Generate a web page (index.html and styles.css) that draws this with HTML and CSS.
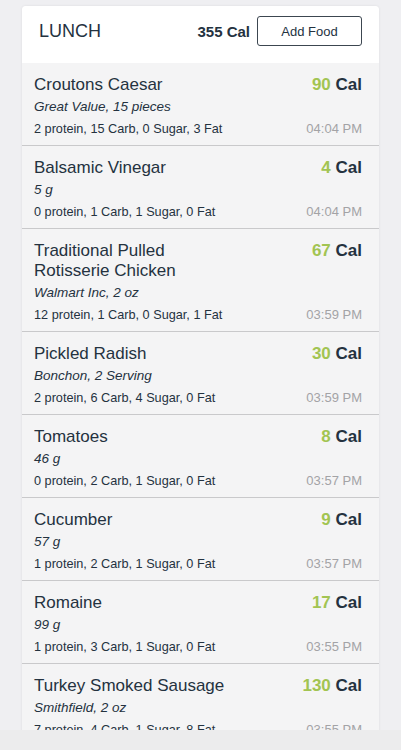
FILE: index.html
```html
<!DOCTYPE html>
<html lang="en">
<head>
    <meta charset="UTF-8">
    <meta name="viewport" content="width=device-width, initial-scale=1.0">
    <title>Lunch</title>
    <link rel="stylesheet" href="styles.css">
</head>
<body>
    <div class="screen">
        <div class="card">
            <div class="card-header">
                <h1>LUNCH</h1>
                <span class="total">355 Cal</span>
                <button class="add-btn">Add Food</button>
            </div>

            <div class="food">
                <div class="food-row">
                    <div class="food-name">Croutons Caesar</div>
                    <div class="food-cal"><span class="num">90</span> Cal</div>
                </div>
                <div class="food-serving">Great Value, 15 pieces</div>
                <div class="food-row">
                    <div class="food-macros">2 protein, 15 Carb, 0 Sugar, 3 Fat</div>
                    <div class="food-time">04:04 PM</div>
                </div>
            </div>

            <div class="food">
                <div class="food-row">
                    <div class="food-name">Balsamic Vinegar</div>
                    <div class="food-cal"><span class="num">4</span> Cal</div>
                </div>
                <div class="food-serving">5 g</div>
                <div class="food-row">
                    <div class="food-macros">0 protein, 1 Carb, 1 Sugar, 0 Fat</div>
                    <div class="food-time">04:04 PM</div>
                </div>
            </div>

            <div class="food">
                <div class="food-row">
                    <div class="food-name">Traditional Pulled Rotisserie Chicken</div>
                    <div class="food-cal"><span class="num">67</span> Cal</div>
                </div>
                <div class="food-serving">Walmart Inc, 2 oz</div>
                <div class="food-row">
                    <div class="food-macros">12 protein, 1 Carb, 0 Sugar, 1 Fat</div>
                    <div class="food-time">03:59 PM</div>
                </div>
            </div>

            <div class="food">
                <div class="food-row">
                    <div class="food-name">Pickled Radish</div>
                    <div class="food-cal"><span class="num">30</span> Cal</div>
                </div>
                <div class="food-serving">Bonchon, 2 Serving</div>
                <div class="food-row">
                    <div class="food-macros">2 protein, 6 Carb, 4 Sugar, 0 Fat</div>
                    <div class="food-time">03:59 PM</div>
                </div>
            </div>

            <div class="food">
                <div class="food-row">
                    <div class="food-name">Tomatoes</div>
                    <div class="food-cal"><span class="num">8</span> Cal</div>
                </div>
                <div class="food-serving">46 g</div>
                <div class="food-row">
                    <div class="food-macros">0 protein, 2 Carb, 1 Sugar, 0 Fat</div>
                    <div class="food-time">03:57 PM</div>
                </div>
            </div>

            <div class="food">
                <div class="food-row">
                    <div class="food-name">Cucumber</div>
                    <div class="food-cal"><span class="num">9</span> Cal</div>
                </div>
                <div class="food-serving">57 g</div>
                <div class="food-row">
                    <div class="food-macros">1 protein, 2 Carb, 1 Sugar, 0 Fat</div>
                    <div class="food-time">03:57 PM</div>
                </div>
            </div>

            <div class="food">
                <div class="food-row">
                    <div class="food-name">Romaine</div>
                    <div class="food-cal"><span class="num">17</span> Cal</div>
                </div>
                <div class="food-serving">99 g</div>
                <div class="food-row">
                    <div class="food-macros">1 protein, 3 Carb, 1 Sugar, 0 Fat</div>
                    <div class="food-time">03:55 PM</div>
                </div>
            </div>

            <div class="food">
                <div class="food-row">
                    <div class="food-name">Turkey Smoked Sausage</div>
                    <div class="food-cal"><span class="num">130</span> Cal</div>
                </div>
                <div class="food-serving">Smithfield, 2 oz</div>
                <div class="food-row">
                    <div class="food-macros">7 protein, 4 Carb, 1 Sugar, 8 Fat</div>
                    <div class="food-time">03:55 PM</div>
                </div>
            </div>
        </div>
    </div>

    <div class="bottom-bar"></div>
</body>
</html>
```

FILE: styles.css
```css
body {
    font-family: "Liberation Sans", Arial, sans-serif;
    margin: 0;
    height: 750px;
    display: flex;
    flex-direction: column;
    background-color: #efeff2;
    color: #24323f;
    overflow: hidden;
}
.screen {
    flex: 1;
    overflow: hidden;
    padding: 6px 22px 0;
}
.card {
    background: #f4f4f5;
    border-radius: 4px 4px 0 0;
    box-shadow: 0 0 3px rgba(0,0,0,0.08);
}
.card-header {
    display: flex;
    align-items: center;
    padding: 10px 17px 17px;
    background: white;
    border-radius: 4px 4px 0 0;
}
.card-header h1 {
    flex: 1;
    margin: 0;
    font-size: 18px;
    font-weight: normal;
    color: #24323f;
}
.total {
    font-size: 15px;
    font-weight: bold;
    margin-right: 7px;
}
.add-btn {
    width: 105px;
    height: 30px;
    padding: 0;
    background: white;
    border: 1px solid #3c4650;
    border-radius: 3px;
    font-family: inherit;
    font-size: 13px;
    color: #24323f;
}
.food {
    padding: 12px 17px 6px 12px;
    border-bottom: 1px solid #c9c9cb;
}
.food-row {
    display: flex;
    justify-content: space-between;
    align-items: flex-start;
}
.food-name {
    max-width: 200px;
    font-size: 17px;
    line-height: 20px;
    margin-bottom: 2px;
}
.food-cal {
    font-size: 17px;
    line-height: 20px;
    font-weight: bold;
    white-space: nowrap;
}
.food-cal .num {
    color: #a2c452;
}
.food-serving {
    font-size: 13.5px;
    font-style: italic;
    line-height: 20px;
    margin-bottom: 2px;
}
.food-macros {
    font-size: 12.7px;
    line-height: 20px;
}
.food-time {
    font-size: 13px;
    line-height: 20px;
    color: #a3a3a6;
}
.bottom-bar {
    height: 20px;
    background: #ececed;
}
```
